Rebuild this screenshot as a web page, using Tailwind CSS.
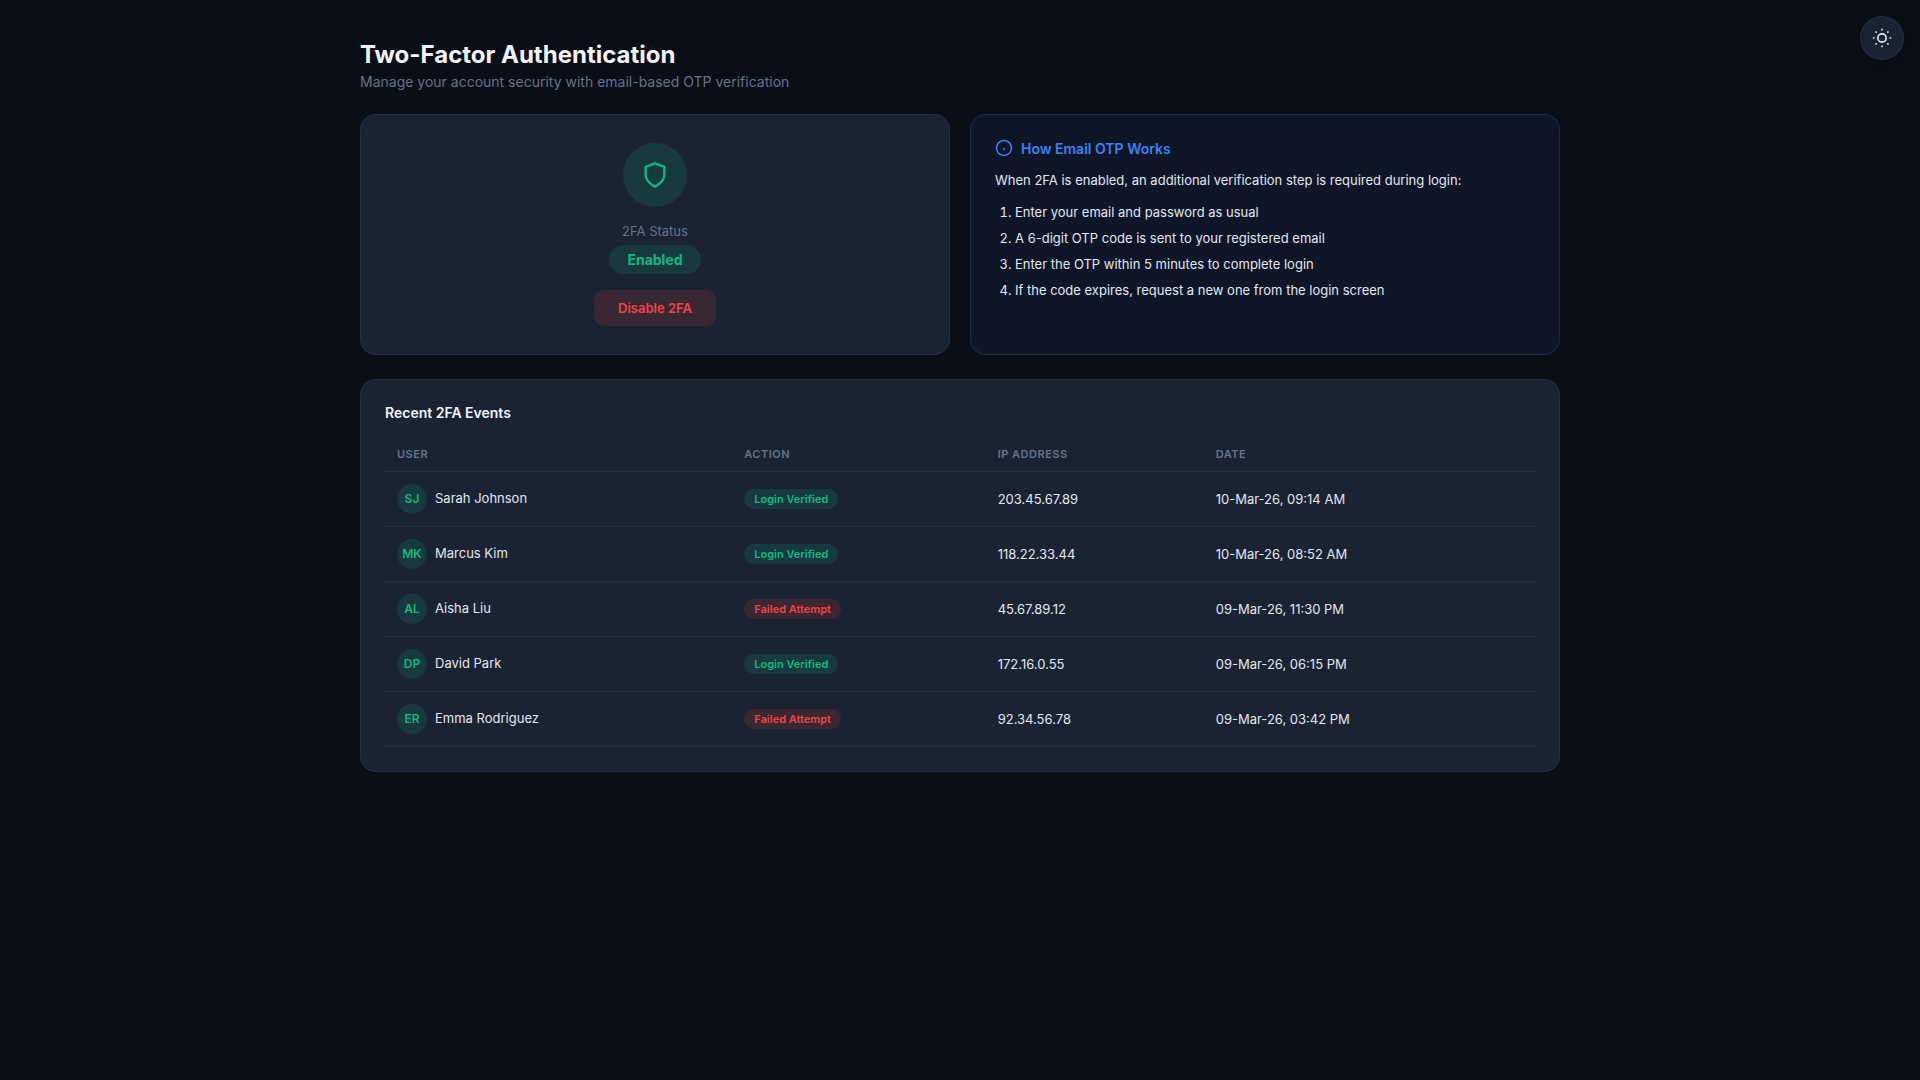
<!DOCTYPE html>
<html lang="en">

<head>
    <meta charset="UTF-8">
    <meta name="viewport" content="width=device-width, initial-scale=1.0">
    <title>Two-Factor Authentication</title>
    <script src="https://cdn.jsdelivr.net/npm/@tailwindcss/browser@4"></script>
</head>

<body class="bg-[#0a0e17] font-['Inter',sans-serif] text-[#e2e8f0] min-h-screen">
    <!-- Theme Toggle -->
    <button id="toggleTheme" class="fixed top-4 right-4 w-11 h-11 rounded-full bg-[#1a2332] border border-white/6 flex items-center justify-center text-[#e2e8f0] shadow-[0_4px_12px_rgba(0,0,0,0.15)]">
        <svg class="w-5 h-5" viewBox="0 0 24 24" fill="none" stroke="currentColor" stroke-width="2">
            <circle cx="12" cy="12" r="5" />
            <path d="M12 1v2M12 21v2M4.2 4.2l1.4 1.4M18.4 18.4l1.4 1.4M1 12h2M21 12h2M4.2 19.8l1.4-1.4M18.4 5.6l1.4-1.4" />
        </svg>
    </button>

    <div class="w-[1200px] mx-auto pt-10">
        <header class="mb-6">
            <h1 class="text-2xl leading-[29px] font-bold text-[#f1f5f9]">Two-Factor Authentication</h1>
            <p class="mt-1 text-sm leading-[17px] text-[#64748b]">Manage your account security with email-based OTP verification</p>
        </header>

        <div class="grid grid-cols-2 gap-5 mb-6">
            <!-- Status -->
            <div class="bg-[#1a2332] border border-white/6 rounded-2xl p-7 flex flex-col items-center">
                <div class="w-16 h-16 rounded-full bg-[#10b981]/15 text-[#10b981] flex items-center justify-center mb-4">
                    <svg class="w-7 h-7" viewBox="0 0 24 24" fill="none" stroke="currentColor" stroke-width="2">
                        <path d="M12 22s8-4 8-10V5l-8-3-8 3v7c0 6 8 10 8 10z" />
                    </svg>
                </div>
                <div class="text-[13px] leading-4 text-[#64748b] mb-1.5">2FA Status</div>
                <span class="rounded-[20px] bg-[#10b981]/15 text-[#10b981] text-sm leading-[17px] font-bold px-[18px] py-1.5 mb-4">Enabled</span>
                <button class="h-9 px-6 pt-px rounded-[10px] bg-[#ef4444]/15 text-[#ef4444] text-[13px] font-semibold">Disable 2FA</button>
            </div>

            <!-- How it works -->
            <div class="bg-[#3b82f6]/8 border border-[#3b82f6]/20 rounded-2xl p-6">
                <h2 class="flex items-center gap-2 text-sm leading-[18px] font-semibold text-[#3b82f6] mb-3">
                    <svg class="w-[18px] h-[18px]" viewBox="0 0 24 24" fill="none" stroke="currentColor" stroke-width="2">
                        <circle cx="12" cy="12" r="10" />
                        <path d="M12 12v3" />
                    </svg>
                    <span class="h-[18px] pt-px">How Email OTP Works</span>
                </h2>
                <p class="text-[13px] leading-[22px] mb-2.5">When 2FA is enabled, an additional verification step is required during login:</p>
                <ol class="list-decimal pl-5 text-[13px] leading-[22px] space-y-1">
                    <li>Enter your email and password as usual</li>
                    <li>A 6-digit OTP code is sent to your registered email</li>
                    <li>Enter the OTP within 5 minutes to complete login</li>
                    <li>If the code expires, request a new one from the login screen</li>
                </ol>
            </div>
        </div>

        <!-- Recent Events -->
        <div class="bg-[#1a2332] border border-white/6 rounded-2xl p-6">
            <h2 class="text-sm leading-[17px] font-semibold text-[#f1f5f9] mb-4">Recent 2FA Events</h2>
            <table class="w-full table-fixed text-left text-[13px]">
                <thead>
                    <tr class="h-[34px] border-b border-white/6 text-[11px] tracking-[0.5px] text-[#64748b]">
                        <th class="w-[347.3px] px-3 font-semibold">USER</th>
                        <th class="w-[253.4px] px-3 font-semibold">ACTION</th>
                        <th class="w-[218px] px-3 font-semibold">IP ADDRESS</th>
                        <th class="px-3 font-semibold">DATE</th>
                    </tr>
                </thead>
                <tbody id="eventRows"></tbody>
            </table>
        </div>
    </div>

    <script>
        const events = [
            { initials: 'SJ', name: 'Sarah Johnson', ok: true, ip: '203.45.67.89', date: '10-Mar-26, 09:14 AM' },
            { initials: 'MK', name: 'Marcus Kim', ok: true, ip: '118.22.33.44', date: '10-Mar-26, 08:52 AM' },
            { initials: 'AL', name: 'Aisha Liu', ok: false, ip: '45.67.89.12', date: '09-Mar-26, 11:30 PM' },
            { initials: 'DP', name: 'David Park', ok: true, ip: '172.16.0.55', date: '09-Mar-26, 06:15 PM' },
            { initials: 'ER', name: 'Emma Rodriguez', ok: false, ip: '92.34.56.78', date: '09-Mar-26, 03:42 PM' }
        ];

        document.getElementById('eventRows').innerHTML = events.map(event => `
            <tr class="h-[55px] border-b border-white/6">
                <td class="px-3">
                    <div class="flex items-center gap-2">
                        <span class="w-[30px] h-[30px] pt-px rounded-full bg-[#10b981]/15 text-[#10b981] text-xs font-semibold flex items-center justify-center">${event.initials}</span>
                        <span>${event.name}</span>
                    </div>
                </td>
                <td class="px-3">
                    <span class="inline-block align-middle rounded-[20px] px-2.5 h-5 leading-5 text-[11px] font-semibold ${event.ok ? 'bg-[#10b981]/15 text-[#10b981]' : 'bg-[#ef4444]/15 text-[#ef4444]'}">${event.ok ? 'Login Verified' : 'Failed Attempt'}</span>
                </td>
                <td class="px-3 pt-0.5">${event.ip}</td>
                <td class="px-3 pt-0.5">${event.date}</td>
            </tr>
        `).join('');
    </script>
</body>

</html>
